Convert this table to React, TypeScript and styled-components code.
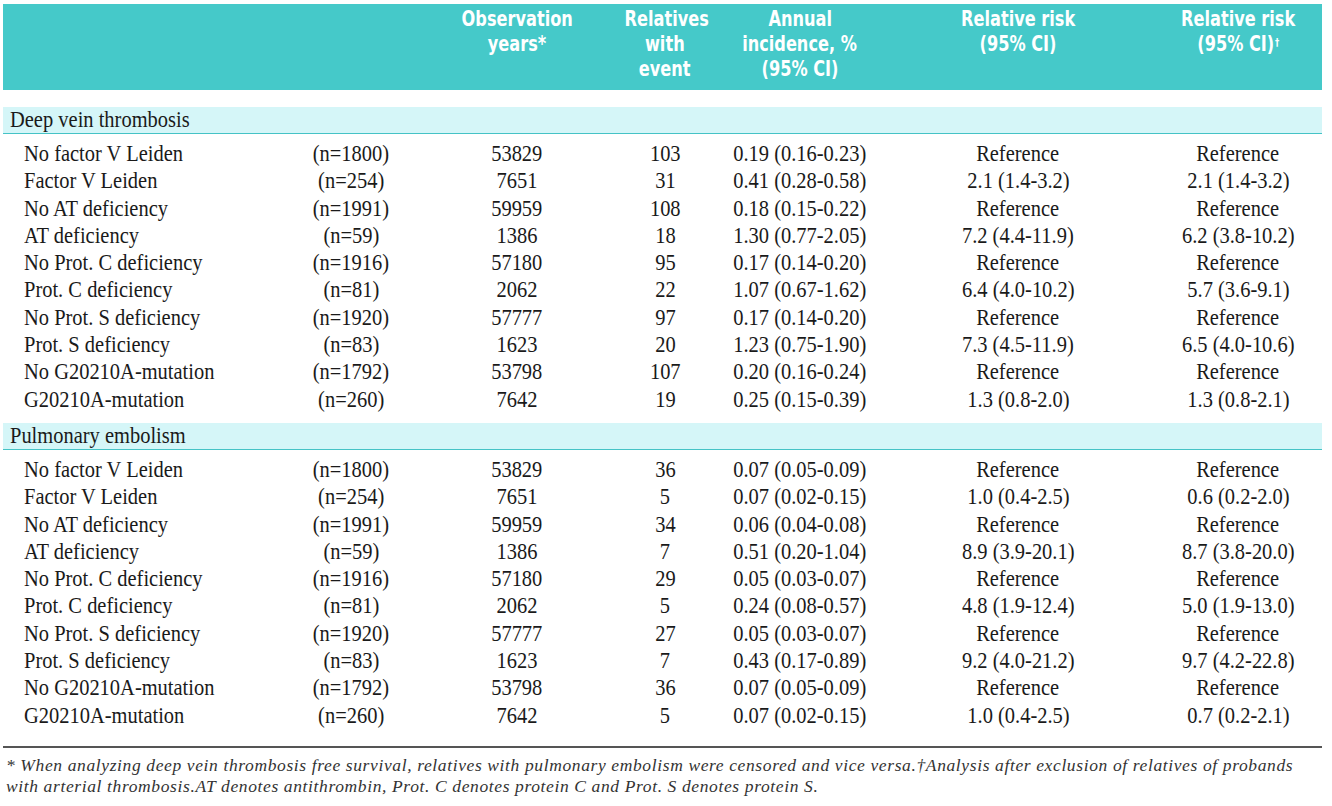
import React from "react";
import styled, { createGlobalStyle } from "styled-components";

const Global = createGlobalStyle`
  html, body { margin: 0; padding: 0; background: #ffffff; }
  body { font-family: "Liberation Serif", "Times New Roman", serif; color: #1a1a1a; }
`;

const COLS = "277px 142px 190px 106px 164px 272px 168px";

const Page = styled.div`
  padding: 4px 0 0 3px;
  width: 1319px;
`;

const HeaderRow = styled.div`
  display: grid;
  grid-template-columns: ${COLS};
  background: #45c9c9;
  height: 86px;
  padding-top: 3px;
  box-sizing: border-box;
`;

const HeadCell = styled.div`
  font-family: "DejaVu Sans", "Liberation Sans", sans-serif;
  font-weight: 700;
  font-size: 21px;
  line-height: 25px;
  color: #ffffff;
  text-align: center;
`;

const Narrow = styled.span<{ $scale: number; $origin?: string }>`
  display: inline-block;
  white-space: nowrap;
  transform: scaleX(${(p) => p.$scale});
  transform-origin: ${(p) => p.$origin || "center"};
`;

const Sup = styled.sup`
  font-size: 11px;
  vertical-align: top;
  position: relative;
  top: -2px;
  margin-left: 1px;
`;

const Section = styled.div<{ $top: number }>`
  margin-top: ${(p) => p.$top}px;
  height: 26px;
  background: #d5f6f8;
  border-bottom: 1.5px solid #45c3c6;
  font-size: 23px;
  line-height: 26px;
  padding-left: 7px;
`;

const Rows = styled.div`
  padding-top: 6px;
`;

const Row = styled.div`
  display: grid;
  grid-template-columns: ${COLS};
  height: 27.3px;
  font-size: 23px;
  line-height: 27px;
`;

const Cell = styled.div<{ $left?: boolean }>`
  text-align: ${(p) => (p.$left ? "left" : "center")};
  padding-left: ${(p) => (p.$left ? "21px" : "0")};
  white-space: nowrap;
`;

const Rule = styled.div`
  margin-top: 17px;
  height: 2px;
  background: #555;
`;

const Foot = styled.div`
  font-family: "Liberation Serif", "Times New Roman", serif;
  font-style: italic;
  font-size: 17.5px;
  letter-spacing: 0.62px;
  line-height: 21px;
  color: #333;
  padding: 7px 0 0 3px;
  white-space: nowrap;
`;

type R = [string, string, string, string, string, string, string];

const dvt: R[] = [
  ["No factor V Leiden", "(n=1800)", "53829", "103", "0.19 (0.16-0.23)", "Reference", "Reference"],
  ["Factor V Leiden", "(n=254)", "7651", "31", "0.41 (0.28-0.58)", "2.1 (1.4-3.2)", "2.1 (1.4-3.2)"],
  ["No AT deficiency", "(n=1991)", "59959", "108", "0.18 (0.15-0.22)", "Reference", "Reference"],
  ["AT deficiency", "(n=59)", "1386", "18", "1.30 (0.77-2.05)", "7.2 (4.4-11.9)", "6.2 (3.8-10.2)"],
  ["No Prot. C deficiency", "(n=1916)", "57180", "95", "0.17 (0.14-0.20)", "Reference", "Reference"],
  ["Prot. C deficiency", "(n=81)", "2062", "22", "1.07 (0.67-1.62)", "6.4 (4.0-10.2)", "5.7 (3.6-9.1)"],
  ["No Prot. S deficiency", "(n=1920)", "57777", "97", "0.17 (0.14-0.20)", "Reference", "Reference"],
  ["Prot. S deficiency", "(n=83)", "1623", "20", "1.23 (0.75-1.90)", "7.3 (4.5-11.9)", "6.5 (4.0-10.6)"],
  ["No G20210A-mutation", "(n=1792)", "53798", "107", "0.20 (0.16-0.24)", "Reference", "Reference"],
  ["G20210A-mutation", "(n=260)", "7642", "19", "0.25 (0.15-0.39)", "1.3 (0.8-2.0)", "1.3 (0.8-2.1)"],
];

const pe: R[] = [
  ["No factor V Leiden", "(n=1800)", "53829", "36", "0.07 (0.05-0.09)", "Reference", "Reference"],
  ["Factor V Leiden", "(n=254)", "7651", "5", "0.07 (0.02-0.15)", "1.0 (0.4-2.5)", "0.6 (0.2-2.0)"],
  ["No AT deficiency", "(n=1991)", "59959", "34", "0.06 (0.04-0.08)", "Reference", "Reference"],
  ["AT deficiency", "(n=59)", "1386", "7", "0.51 (0.20-1.04)", "8.9 (3.9-20.1)", "8.7 (3.8-20.0)"],
  ["No Prot. C deficiency", "(n=1916)", "57180", "29", "0.05 (0.03-0.07)", "Reference", "Reference"],
  ["Prot. C deficiency", "(n=81)", "2062", "5", "0.24 (0.08-0.57)", "4.8 (1.9-12.4)", "5.0 (1.9-13.0)"],
  ["No Prot. S deficiency", "(n=1920)", "57777", "27", "0.05 (0.03-0.07)", "Reference", "Reference"],
  ["Prot. S deficiency", "(n=83)", "1623", "7", "0.43 (0.17-0.89)", "9.2 (4.0-21.2)", "9.7 (4.2-22.8)"],
  ["No G20210A-mutation", "(n=1792)", "53798", "36", "0.07 (0.05-0.09)", "Reference", "Reference"],
  ["G20210A-mutation", "(n=260)", "7642", "5", "0.07 (0.02-0.15)", "1.0 (0.4-2.5)", "0.7 (0.2-2.1)"],
];

const Block = ({ rows }: { rows: R[] }) => (
  <Rows>
    {rows.map((r, i) => (
      <Row key={i}>
        {r.map((c, j) => (
          <Cell key={j} $left={j === 0}>
            <Narrow $scale={0.89} $origin={j === 0 ? "left" : "center"}>
              {c}
            </Narrow>
          </Cell>
        ))}
      </Row>
    ))}
  </Rows>
);

const H = ({ lines, dagger }: { lines: string[]; dagger?: boolean }) => (
  <HeadCell>
    {lines.map((l, i) => (
      <div key={i}>
        <Narrow $scale={0.77}>
          {l}
          {dagger && i === lines.length - 1 ? <Sup>†</Sup> : null}
        </Narrow>
      </div>
    ))}
  </HeadCell>
);

export default function App() {
  return (
    <>
      <Global />
      <Page>
        <HeaderRow>
          <HeadCell />
          <HeadCell />
          <H lines={["Observation", "years*"]} />
          <H lines={["Relatives", "with", "event"]} />
          <H lines={["Annual", "incidence, %", "(95% CI)"]} />
          <H lines={["Relative risk", "(95% CI)"]} />
          <H lines={["Relative risk", "(95% CI)"]} dagger />
        </HeaderRow>
        <Section $top={17}>
          <Narrow $scale={0.89} $origin="left">Deep vein thrombosis</Narrow>
        </Section>
        <Block rows={dvt} />
        <Section $top={10}>
          <Narrow $scale={0.89} $origin="left">Pulmonary embolism</Narrow>
        </Section>
        <Block rows={pe} />
        <Rule />
        <Foot>
          * When analyzing deep vein thrombosis free survival, relatives with pulmonary embolism were censored and vice versa.†Analysis after exclusion of relatives of probands
          <br />
          with arterial thrombosis.AT denotes antithrombin, Prot. C denotes protein C and Prot. S denotes protein S.
        </Foot>
      </Page>
    </>
  );
}
